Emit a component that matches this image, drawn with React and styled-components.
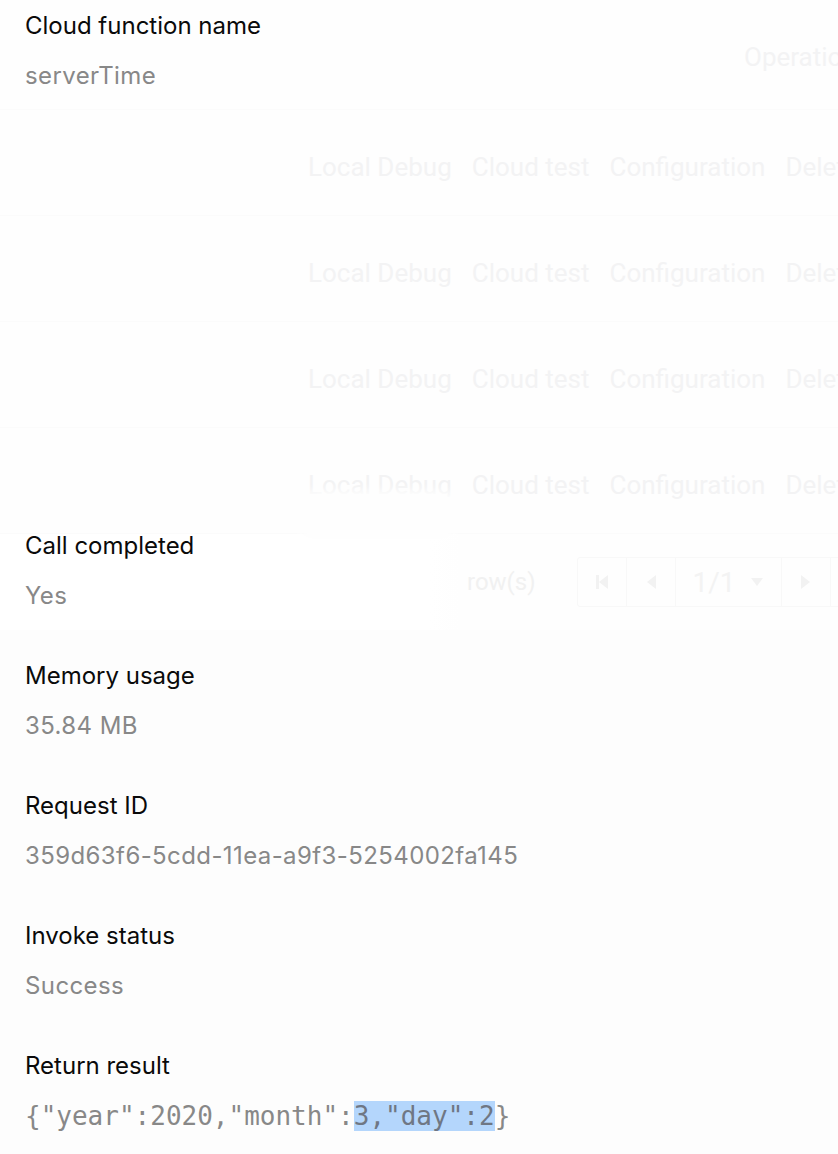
import React from 'react';
import styled, { createGlobalStyle } from 'styled-components';

const GlobalStyle = createGlobalStyle`
  html, body {
    margin: 0;
    padding: 0;
    background: #ffffff;
  }
  body {
    font-family: Inter, "Liberation Sans", sans-serif;
    overflow: hidden;
  }
`;

const Stage = styled.div`
  display: grid;
  width: 838px;
  height: 1154px;
  overflow: hidden;
  & > * {
    grid-area: 1 / 1;
  }
`;

/* faded table that shows through the sheet */
const Backdrop = styled.div`
  display: flex;
  flex-direction: column;
  font-family: Roboto, "Liberation Sans", sans-serif;
  color: #f3f3f4;
  background: #fdfdfd;
`;

const HeadRow = styled.div`
  height: 110px;
  display: flex;
  align-items: center;
  padding: 4px 0 0 744px;
  box-sizing: border-box;
  background: #fefefe;
  border-bottom: 1px solid #fbfbfb;
  font-size: 26px;
  white-space: nowrap;
`;

const Row = styled.div`
  position: relative;
  height: 106px;
  display: flex;
  align-items: center;
  gap: 20px;
  padding: 8px 0 0 308px;
  box-sizing: border-box;
  background: #fefefe;
  border-bottom: 1px solid #fbfbfb;
  font-size: 26px;
  white-space: nowrap;
`;

const Glare = styled.div`
  position: absolute;
  left: 300px;
  top: 67px;
  width: 155px;
  height: 40px;
  border-radius: 14px;
  background: #fefefe;
  box-shadow: 0 0 10px 4px #fefefe;
`;

const Footer = styled.div`
  height: 96px;
  display: flex;
  align-items: center;
  padding: 0 0 0 467px;
  background: linear-gradient(to right, #ffffff 0, #ffffff 430px, #fefefe 460px);
  font-size: 24px;
  color: #f1f1f1;
`;

const Pager = styled.div`
  display: flex;
  margin-left: 41px;
  height: 48px;
  border: 1px solid #f8f8f8;
  border-radius: 3px;
  flex-shrink: 0;
`;

const PageCell = styled.div`
  width: ${(p) => p.w}px;
  display: flex;
  align-items: center;
  justify-content: center;
  gap: 14px;
  border-right: 1px solid #f8f8f8;
  font-size: 28px;
  color: #f3f3f3;
`;

/* the detail sheet */
const Sheet = styled.div`
  display: flex;
  flex-direction: column;
  padding: 1px 0 0 25px;
`;

const Item = styled.div`
  height: 130px;
  display: flex;
  flex-direction: column;
`;

const Label = styled.div`
  height: 50px;
  line-height: 50px;
  font-size: 24px;
  color: #0a0a0a;
`;

const Value = styled.div`
  height: 50px;
  line-height: 50px;
  color: #888888;
  font-family: ${(p) => (p.mono ? '"DejaVu Sans Mono", monospace' : 'inherit')};
  font-size: ${(p) => (p.mono ? '26px' : '24px')};
  letter-spacing: ${(p) => (p.mono ? '0' : '0.4px')};
  white-space: nowrap;
`;

const Selected = styled.span`
  background: #b4d6fc;
  color: #6f7784;
`;

const Tri = ({ dir }) => (
  <svg width="12" height="18" viewBox="0 0 12 18">
    <path d={dir === 'left' ? 'M11 2 L2 9 L11 16 Z' : 'M1 2 L10 9 L1 16 Z'} fill="#f2f2f2" />
  </svg>
);

const First = () => (
  <svg width="16" height="18" viewBox="0 0 16 18">
    <rect x="2" y="2" width="3" height="14" fill="#f2f2f2" />
    <path d="M14 2 L5 9 L14 16 Z" fill="#f2f2f2" />
  </svg>
);

const Caret = () => (
  <svg width="14" height="10" viewBox="0 0 14 10">
    <path d="M1 1 L13 1 L7 9 Z" fill="#f2f2f2" />
  </svg>
);

const actions = ['Local Debug', 'Cloud test', 'Configuration', 'Delete'];

const details = [
  ['Cloud function name', 'serverTime'],
  ['Start time', '2020-03-03 07:26:14'],
  ['Duration', '1.32ms'],
  ['Billing duration', '2ms'],
  ['Call completed', 'Yes'],
  ['Memory usage', '35.84 MB'],
  ['Request ID', '359d63f6-5cdd-11ea-a9f3-5254002fa145'],
  ['Invoke status', 'Success'],
];

export default function App() {
  return (
    <>
      <GlobalStyle />
      <Stage>
        <Backdrop>
          <HeadRow>Operation</HeadRow>
          {[0, 1, 2, 3].map((i) => (
            <Row key={i}>
              {actions.map((a) => (
                <span key={a}>{a}</span>
              ))}
              {i === 3 && <Glare />}
            </Row>
          ))}
          <Footer>
            row(s)
            <Pager>
              <PageCell w={48}><First /></PageCell>
              <PageCell w={48}><Tri dir="left" /></PageCell>
              <PageCell w={105}>1/1 <Caret /></PageCell>
              <PageCell w={48}><Tri dir="right" /></PageCell>
              <PageCell w={48}></PageCell>
            </Pager>
          </Footer>
        </Backdrop>
        <Sheet>
          {details.map(([k, v]) => (
            <Item key={k}>
              <Label>{k}</Label>
              <Value>{v}</Value>
            </Item>
          ))}
          <Item>
            <Label>Return result</Label>
            <Value mono>
              {'{"year":2020,"month":'}
              <Selected>{'3,"day":2'}</Selected>
              {'}'}
            </Value>
          </Item>
        </Sheet>
      </Stage>
    </>
  );
}
